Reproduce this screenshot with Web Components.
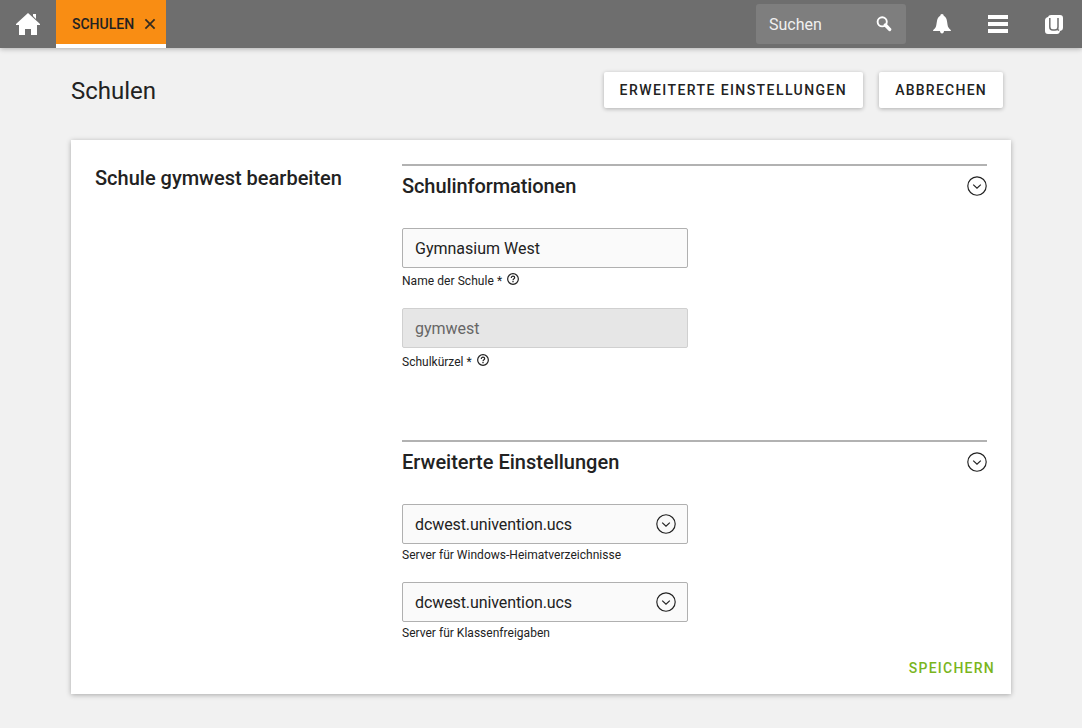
<!DOCTYPE html>
<html lang="de">
<head>
<meta charset="utf-8">
<title>Schulen</title>
<style>
html,body{margin:0;height:100%}
body{background:#f1f1f1;color:#222;font:16px/20px Roboto,sans-serif;overflow:hidden}
</style>
</head>
<body>
<school-app></school-app>
<script>
const define = (name, html) => customElements.define(name, class extends HTMLElement {
  constructor() {
    super();
    const t = document.createElement('template');
    t.innerHTML = typeof html === 'function' ? html(this) : html;
    this.attachShadow({mode: 'open'}).append(t.content.cloneNode(true));
  }
});

define('chevron-circle', `
<style>:host{display:block;width:20px;height:20px;flex:none}svg{display:block}</style>
<svg width="20" height="20" viewBox="0 0 20 20" fill="none" stroke="#222"><circle cx="10" cy="10" r="9.2" stroke-width="1.15"/><path d="M6.2 8.6 10 12.1l3.8-3.5" stroke-width="1.2"/></svg>`);

define('help-icon', `
<style>:host{display:block;width:12px;height:12px;flex:none}svg{display:block}</style>
<svg width="12" height="12" viewBox="0 0 12 12" fill="none" stroke="#222"><circle cx="6" cy="6" r="5.35" stroke-width="1.2"/><path d="M4.3 4.9C4.3 3.8 5 3.2 6 3.2s1.7.6 1.7 1.5C7.7 5.8 6 5.8 6 7.2" stroke-width="1.2"/><path d="M6 8v1.2" stroke-width="1.3"/></svg>`);

define('module-tab', `
<style>:host{display:flex;box-sizing:border-box;align-items:center;width:110px;height:48px;padding:4px 10px 0 16px;background:#f98d13;border-bottom:4px solid #fff;color:#222;font-size:14px;font-weight:500;justify-content:space-between}</style>
<span><slot></slot></span><svg width="12" height="12" viewBox="0 0 12 12" stroke="#332b20" stroke-width="1.7"><path d="M1.4 1.4 10.6 10.6M10.6 1.4 1.4 10.6"/></svg>`);

define('search-box', `
<style>:host{display:flex;box-sizing:border-box;align-items:center;justify-content:space-between;width:150px;height:40px;padding:0 14px 0 13px;border-radius:3px;background:#7e7e7e;color:#f0f0f0}span{padding-top:2px}svg{display:block}</style>
<span><slot></slot></span><svg width="16" height="16" viewBox="0 0 16 16" fill="none" stroke="#fff"><circle cx="6.2" cy="5.8" r="4.6" stroke-width="1.9"/><path d="M9.4 9 13.6 13.4" stroke-width="3.4" stroke-linecap="round"/></svg>`);

define('top-bar', `
<style>:host{display:flex;position:relative;height:48px;background:#6e6e6e;box-shadow:0 1px 5px rgba(0,0,0,.28);align-items:center}
.home{width:56px;display:grid;place-items:center}.grow{flex:1}
.icons{display:flex;align-items:center;margin:0 18px 0 26px}svg{display:block}.menu,.logo{margin-left:36px}</style>
<div class="home"><svg width="24" height="24" viewBox="0 0 24 24" fill="#fff"><path d="M12 1 24 12v1h-3v10h-6v-6H9v6H3V13H0v-1zM17 2h3v5l-3-3z"/></svg></div>
<slot name="tab"></slot><div class="grow"></div><slot name="search"></slot>
<div class="icons">
<svg width="20" height="20" viewBox="0 0 20 20" fill="#fff"><path d="M10 0c1.200 0 1.600.9 1.700 1.700C16 3.500 14.800 11 16.500 13.600 17.200 14.900 19 15.600 19 17h-7c-.2 1.800-.9 2.400-2 2.400S8.200 18.800 8 17H1c0-1.400 1.800-2.100 2.500-3.400C5.200 11 4 3.500 8.300 1.700 8.400.9 8.800 0 10 0z"/></svg>
<svg class="menu" width="20" height="18" viewBox="0 0 20 18" fill="#fff"><path d="M0 0h20v4H0zM0 7h20v4H0zM0 14h20v4H0z"/></svg>
<svg class="logo" width="20" height="20" viewBox="0 0 20 20"><path d="M7 1h9q3 0 3 3v9.500q0 3-3 3.500-.5 3-3 3H4q-3 0-3-3V6.500q0-3 3-3.500.5-2 3-2z" fill="#fff"/><path d="M5.800 4v9q0 3 3 3h2.200q3 0 3-3V4M13.500 15.300l1.500 1.200" fill="none" stroke="#6e6e6e" stroke-width="1.500"/></svg>
</div>`);

define('raised-button', `
<style>:host{display:block;box-sizing:border-box;height:36px;padding:0 16px;line-height:36px;background:#fff;border-radius:2px;box-shadow:0 1px 4px rgba(0,0,0,.28);font-size:14px;font-weight:500;letter-spacing:1.25px;white-space:nowrap}</style><slot></slot>`);

define('page-header', `
<style>:host{display:flex;align-items:center;height:36px;padding:0 8px 0 0;gap:16px}h1{margin:0;padding-top:2px;flex:1;font-size:24px;line-height:36px;font-weight:400}</style>
<h1><slot name="title"></slot></h1><slot></slot>`);

define('form-section', `
<style>:host{display:block;border-top:2px solid #b2b2b2}
header{display:flex;align-items:center;justify-content:space-between;height:40px}
h3{margin:0;font-size:20px;line-height:24px;font-weight:500;letter-spacing:var(--title-spacing,0)}
.body{padding-top:22px}</style>
<header><h3><slot name="title"></slot></h3><chevron-circle></chevron-circle></header><div class="body"><slot></slot></div>`);

define('form-field', el => `
<style>:host{display:block;width:286px}
.box{box-sizing:border-box;height:40px;border:1px solid #b0b0b0;border-radius:2px;background:#fafafa;display:flex;align-items:center;justify-content:space-between;padding:0 11px 0 12px}
.value{padding-top:2px;letter-spacing:var(--value-spacing,0)}
:host([disabled]) .box{background:#e6e6e6;border-color:#d0d0d0;color:#666}
.label{display:flex;font-size:12px;line-height:16px;padding-top:var(--label-gap,5px);gap:5px;letter-spacing:var(--label-spacing,0)}</style>
<div class="box"><span class="value"><slot></slot></span>${el.hasAttribute('select') ? '<chevron-circle></chevron-circle>' : ''}</div>
<div class="label"><slot name="label"></slot>${el.hasAttribute('help') ? '<help-icon></help-icon>' : ''}</div>`);

define('form-card', `
<style>:host{display:grid;grid-template-columns:307px 585px;box-sizing:border-box;height:554px;padding:24px;background:#fff;box-shadow:0 1px 5px rgba(0,0,0,.3);grid-template-rows:482px 24px}
h2{margin:2px 0 0;font-size:20px;line-height:24px;font-weight:500}
.save{grid-column:2;justify-self:end;margin:10px -8px 0 0;color:#7ab51d;font-size:14px;line-height:24px;font-weight:500;letter-spacing:1.25px}</style>
<h2><slot name="title"></slot></h2><div><slot></slot></div><div class="save"><slot name="save"></slot></div>`);

define('school-app', `
<style>:host{display:block}main{padding:24px 71px 0}form-card{margin-top:32px}
.wide{letter-spacing:1.42px}
.first{height:276px;box-sizing:border-box;--title-spacing:-.09px}.name{height:80px;--label-spacing:.06px}.server{--label-gap:3px;--value-spacing:-.09px;--label-spacing:.02px;height:78px}</style>
<top-bar><module-tab slot="tab">SCHULEN</module-tab><search-box slot="search">Suchen</search-box></top-bar>
<main>
<page-header><span slot="title">Schulen</span><raised-button class="wide">ERWEITERTE EINSTELLUNGEN</raised-button><raised-button>ABBRECHEN</raised-button></page-header>
<form-card><span slot="title">Schule gymwest bearbeiten</span>
<form-section class="first"><span slot="title">Schulinformationen</span>
<form-field class="name" help>Gymnasium West<span slot="label">Name der Schule *</span></form-field>
<form-field disabled help style="--label-gap:6px">gymwest<span slot="label">Schulkürzel *</span></form-field></form-section>
<form-section><span slot="title">Erweiterte Einstellungen</span>
<form-field class="server" select>dcwest.univention.ucs<span slot="label">Server für Windows-Heimatverzeichnisse</span></form-field>
<form-field class="server" select>dcwest.univention.ucs<span slot="label">Server für Klassenfreigaben</span></form-field></form-section>
<span slot="save">SPEICHERN</span></form-card>
</main>`);
</script>
</body>
</html>
